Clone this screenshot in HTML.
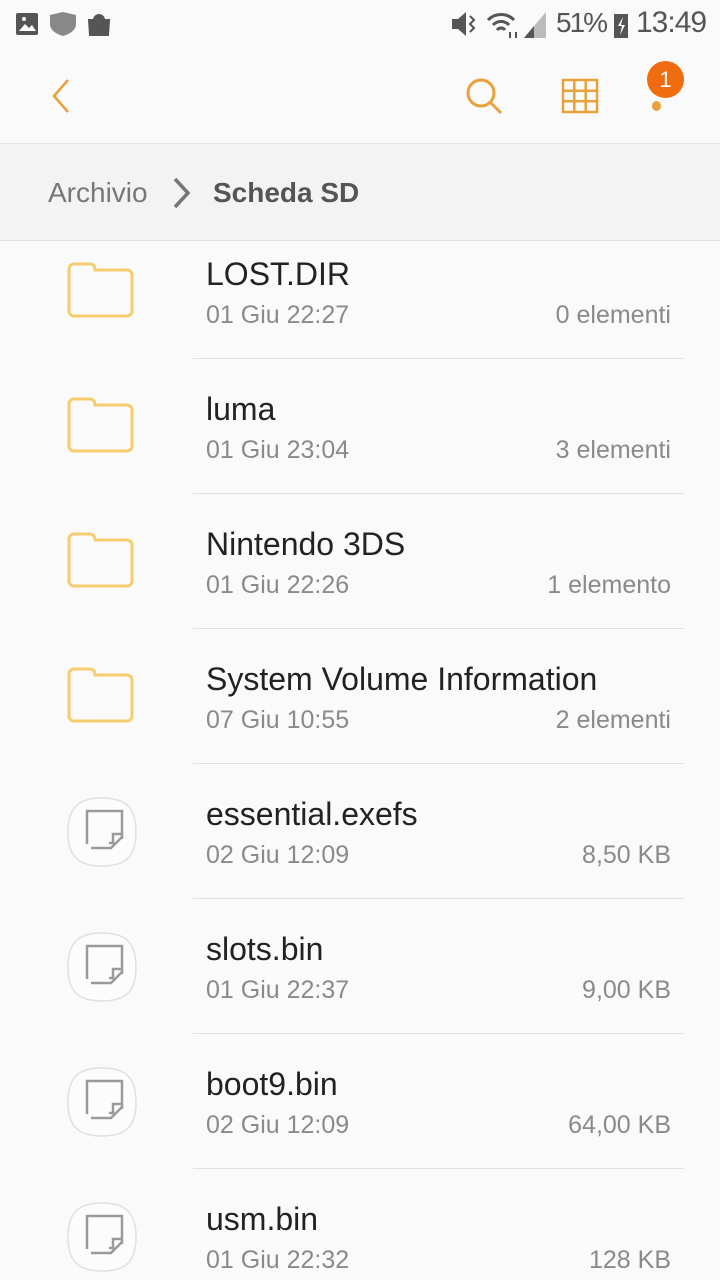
<!DOCTYPE html><html><head><meta charset="utf-8"><style>
body{margin:0;width:720px;height:1280px;background:#fafafa;font-family:"Liberation Sans",sans-serif;position:relative;overflow:hidden}
.a{position:absolute}
.t{font-size:32px;color:#222;left:206px}
.d{font-size:25px;color:#8a8a8a;left:206px}
.r{font-size:25px;color:#8a8a8a;right:49px}
.sep{left:193px;width:491px;height:1px;background:#e2e2e2}
</style></head><body>
<div class="a" style="left:0;top:0;width:720px;height:143px;background:#fafafa;border-bottom:1px solid #e6e6e6"></div>
<svg class="a" style="left:14px;top:10px" width="100" height="28"><rect x="2" y="3" width="22" height="22" rx="2" fill="#555"/><path d="M5 21l6-7 4 4 3-3 4 6z" fill="#fff"/><circle cx="10" cy="9" r="2" fill="#fff"/><path d="M49 2l13 3v9c0 6-6 10-13 12-7-2-13-6-13-12V5z" fill="#888"/><path d="M75 10h20l-1 15H76z M80 10a5 5 0 0 1 10 0" fill="#555" stroke="#555" stroke-width="2"/></svg>
<div class="a" style="left:636px;top:6px;font-size:30px;color:#555;letter-spacing:-1px">13:49</div>
<div class="a" style="left:556px;top:7px;font-size:28px;color:#555;letter-spacing:-2px">51%</div>
<svg class="a" style="left:448px;top:8px" width="190" height="32"><path d="M4 11h6l8-7v24l-8-7H4z" fill="#555"/><path d="M22 8l4 4-4 4 4 4-4 4" stroke="#555" stroke-width="2" fill="none"/><path d="M40 12a18 18 0 0 1 26 0M45 17a11 11 0 0 1 16 0M49 22a5 5 0 0 1 8 0" stroke="#555" stroke-width="3" fill="none"/><path d="M62 24v6M68 30v-6" stroke="#555" stroke-width="2"/><path d="M76 30l22-26v26z" fill="#bbb"/><path d="M76 30l10-12v12z" fill="#555"/><rect x="166" y="6" width="14" height="24" fill="#555"/><path d="M175 9l-5 9h4l-2 9 5-10h-4z" fill="#fff"/></svg>
<svg class="a" style="left:46px;top:76px" width="30" height="40"><path d="M22 4L8 20l14 16" stroke="#e9a23b" stroke-width="2.5" fill="none"/></svg>
<svg class="a" style="left:462px;top:74px" width="44" height="44"><circle cx="19" cy="19" r="13" stroke="#e9a23b" stroke-width="3" fill="none"/><path d="M28 28l11 11" stroke="#e9a23b" stroke-width="3"/></svg>
<svg class="a" style="left:561px;top:78px" width="38" height="36"><path d="M2 2h34v32H2zM2 12.7h34M2 23.3h34M13.3 2v32M24.7 2v32" stroke="#e9a23b" stroke-width="2.5" fill="none"/></svg>
<div class="a" style="left:652px;top:101px;width:9px;height:10px;border-radius:50%;background:#e9a23b"></div>
<div class="a" style="left:647px;top:61px;width:37px;height:37px;border-radius:50%;background:#f06c0e;color:#fff;font-size:22px;text-align:center;line-height:37px">1</div>
<div class="a" style="left:0;top:144px;width:720px;height:96px;background:#f3f3f3;border-bottom:1px solid #e2e2e2"></div>
<div class="a" style="left:48px;top:177px;font-size:28px;color:#777">Archivio</div>
<svg class="a" style="left:170px;top:176px" width="24" height="34"><path d="M5 3l13 14L5 31" stroke="#777" stroke-width="3.5" fill="none"/></svg>
<div class="a" style="left:213px;top:177px;font-size:28px;color:#555;font-weight:bold">Scheda SD</div>
<div id="list"></div>
<script>
var items=[["LOST.DIR","01 Giu 22:27","0 elementi",1],["luma","01 Giu 23:04","3 elementi",1],["Nintendo 3DS","01 Giu 22:26","1 elemento",1],["System Volume Information","07 Giu 10:55","2 elementi",1],["essential.exefs","02 Giu 12:09","8,50 KB",0],["slots.bin","01 Giu 22:37","9,00 KB",0],["boot9.bin","02 Giu 12:09","64,00 KB",0],["usm.bin","01 Giu 22:32","128 KB",0]];
var h="";items.forEach(function(it,i){var y=135*i;
h+='<div class="a t" style="top:'+(256+y)+'px">'+it[0]+'</div><div class="a d" style="top:'+(301+y)+'px">'+it[1]+'</div><div class="a r" style="top:'+(301+y)+'px">'+it[2]+'</div>';
if(i<7)h+='<div class="a sep" style="top:'+(358+y)+'px"></div>';
if(it[3])h+='<svg class="a" style="left:66px;top:'+(261+y)+'px" width="70" height="58"><path d="M3 8a5 5 0 0 1 5-5h16a5 5 0 0 1 5 5v1h32a5 5 0 0 1 5 5v36a5 5 0 0 1-5 5H8a5 5 0 0 1-5-5z" fill="none" stroke="#f5cd6e" stroke-width="3"/></svg>';
else h+='<svg class="a" style="left:66px;top:'+((796-135*4)+y)+'px" width="72" height="72"><path d="M36 2C60 2 70 12 70 36S60 70 36 70 2 60 2 36 12 2 36 2z" fill="#fcfcfc" stroke="#e0e0e0" stroke-width="1.5"/><path d="M21 48V15h35v28M25 52h20l11-11v-3h-9v9h-4" fill="none" stroke="#9a9a9a" stroke-width="2.5"/></svg>';
});document.getElementById("list").innerHTML=h;
</script>
</body></html>
